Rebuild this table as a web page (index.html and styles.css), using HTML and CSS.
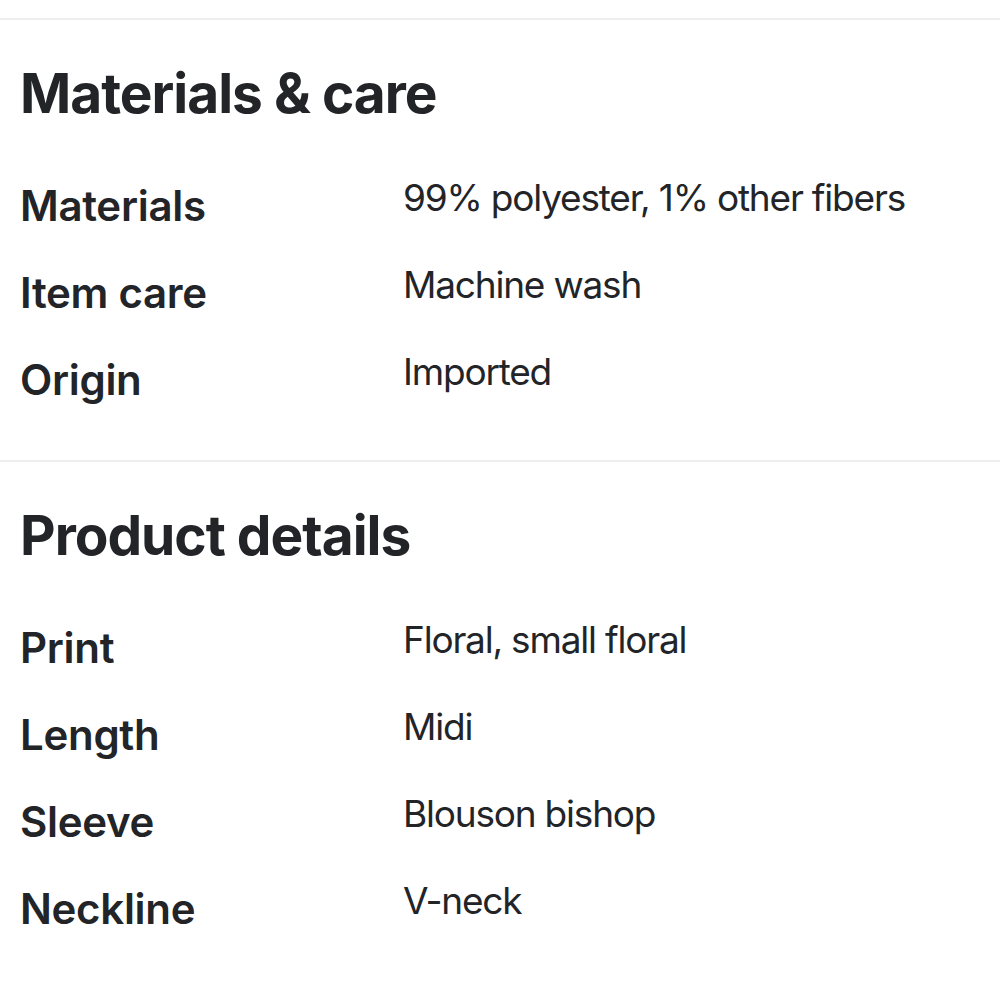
FILE: index.html
```html
<!DOCTYPE html>
<html lang="en">
<head>
  <meta charset="UTF-8">
  <meta name="viewport" content="width=device-width, initial-scale=1.0">
  <title>Product Info</title>
  <link rel="stylesheet" href="styles.css">
</head>
<body>
  <div class="product-info">
    <section class="info-section">
      <h2>Materials &amp; care</h2>
      <div class="spec-list">
        <div class="spec-row">
          <span class="spec-label">Materials</span>
          <span class="spec-value">99% polyester, 1% other fibers</span>
        </div>
        <div class="spec-row">
          <span class="spec-label">Item care</span>
          <span class="spec-value">Machine wash</span>
        </div>
        <div class="spec-row">
          <span class="spec-label">Origin</span>
          <span class="spec-value">Imported</span>
        </div>
      </div>
    </section>

    <section class="info-section">
      <h2>Product details</h2>
      <div class="spec-list">
        <div class="spec-row">
          <span class="spec-label">Print</span>
          <span class="spec-value">Floral, small floral</span>
        </div>
        <div class="spec-row">
          <span class="spec-label">Length</span>
          <span class="spec-value">Midi</span>
        </div>
        <div class="spec-row">
          <span class="spec-label">Sleeve</span>
          <span class="spec-value">Blouson bishop</span>
        </div>
        <div class="spec-row">
          <span class="spec-label">Neckline</span>
          <span class="spec-value">V-neck</span>
        </div>
      </div>
    </section>
  </div>
</body>
</html>
```

FILE: styles.css
```css
/* General Reset */
* {
  margin: 0;
  padding: 0;
  box-sizing: border-box;
}

body {
  font-family: 'Inter', 'Noto Sans', sans-serif;
  background-color: #fff;
  color: #222428;
  padding-top: 18px;
}

/* Sections */
.info-section {
  border-top: 2px solid #eeeeee;
  padding: 41px 20px 37px;
}

.info-section h2 {
  font-size: 55px;
  font-weight: 700;
  line-height: 64px;
  letter-spacing: -1px;
  margin-bottom: 37px;
}

/* Spec rows */
.spec-row {
  display: grid;
  grid-template-columns: 383px 1fr;
  line-height: 87px;
}

.spec-label {
  font-size: 42px;
  font-weight: 600;
  letter-spacing: -0.3px;
}

.spec-value {
  font-size: 37px;
  font-weight: 400;
  letter-spacing: -1.2px;
  margin-top: -8px;
}
```
